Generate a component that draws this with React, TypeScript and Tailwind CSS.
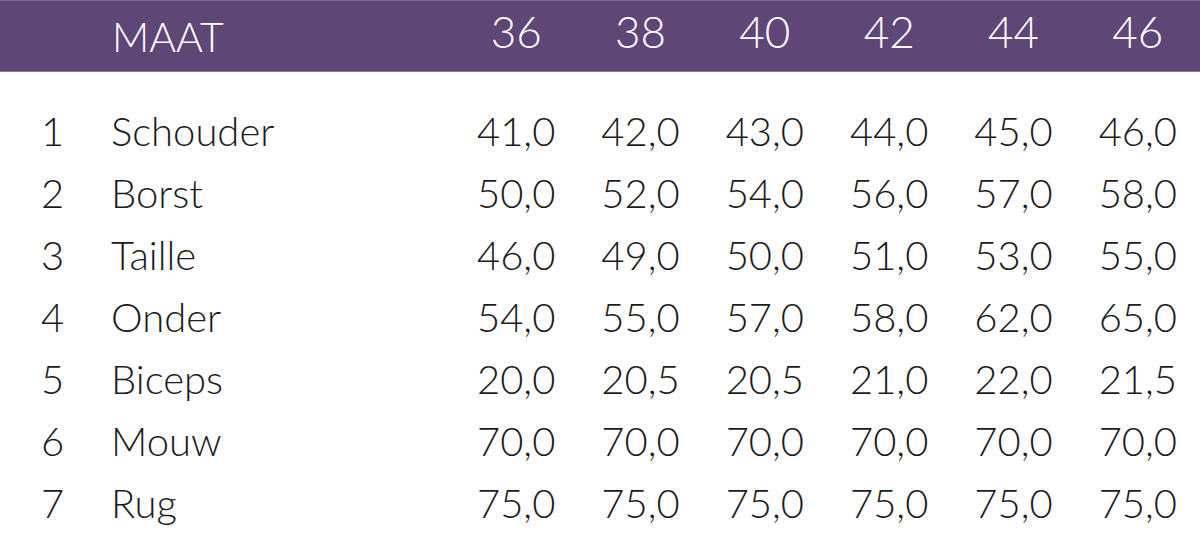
const sizes = ['36', '38', '40', '42', '44', '46'];

const rows: [string, string, string[]][] = [
  ['1', 'Schouder', ['41,0', '42,0', '43,0', '44,0', '45,0', '46,0']],
  ['2', 'Borst', ['50,0', '52,0', '54,0', '56,0', '57,0', '58,0']],
  ['3', 'Taille', ['46,0', '49,0', '50,0', '51,0', '53,0', '55,0']],
  ['4', 'Onder', ['54,0', '55,0', '57,0', '58,0', '62,0', '65,0']],
  ['5', 'Biceps', ['20,0', '20,5', '20,5', '21,0', '22,0', '21,5']],
  ['6', 'Mouw', ['70,0', '70,0', '70,0', '70,0', '70,0', '70,0']],
  ['7', 'Rug', ['75,0', '75,0', '75,0', '75,0', '75,0', '75,0']],
];

const grid = 'grid grid-cols-[111px_343px_repeat(6,1fr)]';

export default function App() {
  return (
    <div className="w-[1200px] h-[535px] bg-white overflow-hidden font-['Lato','Liberation_Sans',sans-serif] font-light text-[40px]">
      <div className={`${grid} h-[72px] bg-[#5e4777] border-t border-b border-t-[#7d6a93] border-b-[#85759a] text-white leading-none`}>
        <div />
        <div className="pt-[15px] text-[41px] pl-px">MAAT</div>
        {sizes.map((s) => (
          <div key={s} className="text-center text-[44px] pt-[8px]">
            {s}
          </div>
        ))}
      </div>

      <div className="pt-[28px] text-[#1c1c1c] leading-[62px]">
        {rows.map(([n, label, values]) => (
          <div key={n} className={grid}>
            <div className="pl-[41px]">{n}</div>
            <div>{label}</div>
            {values.map((v, i) => (
              <div key={i} className="text-center">
                {v}
              </div>
            ))}
          </div>
        ))}
      </div>
    </div>
  );
}
